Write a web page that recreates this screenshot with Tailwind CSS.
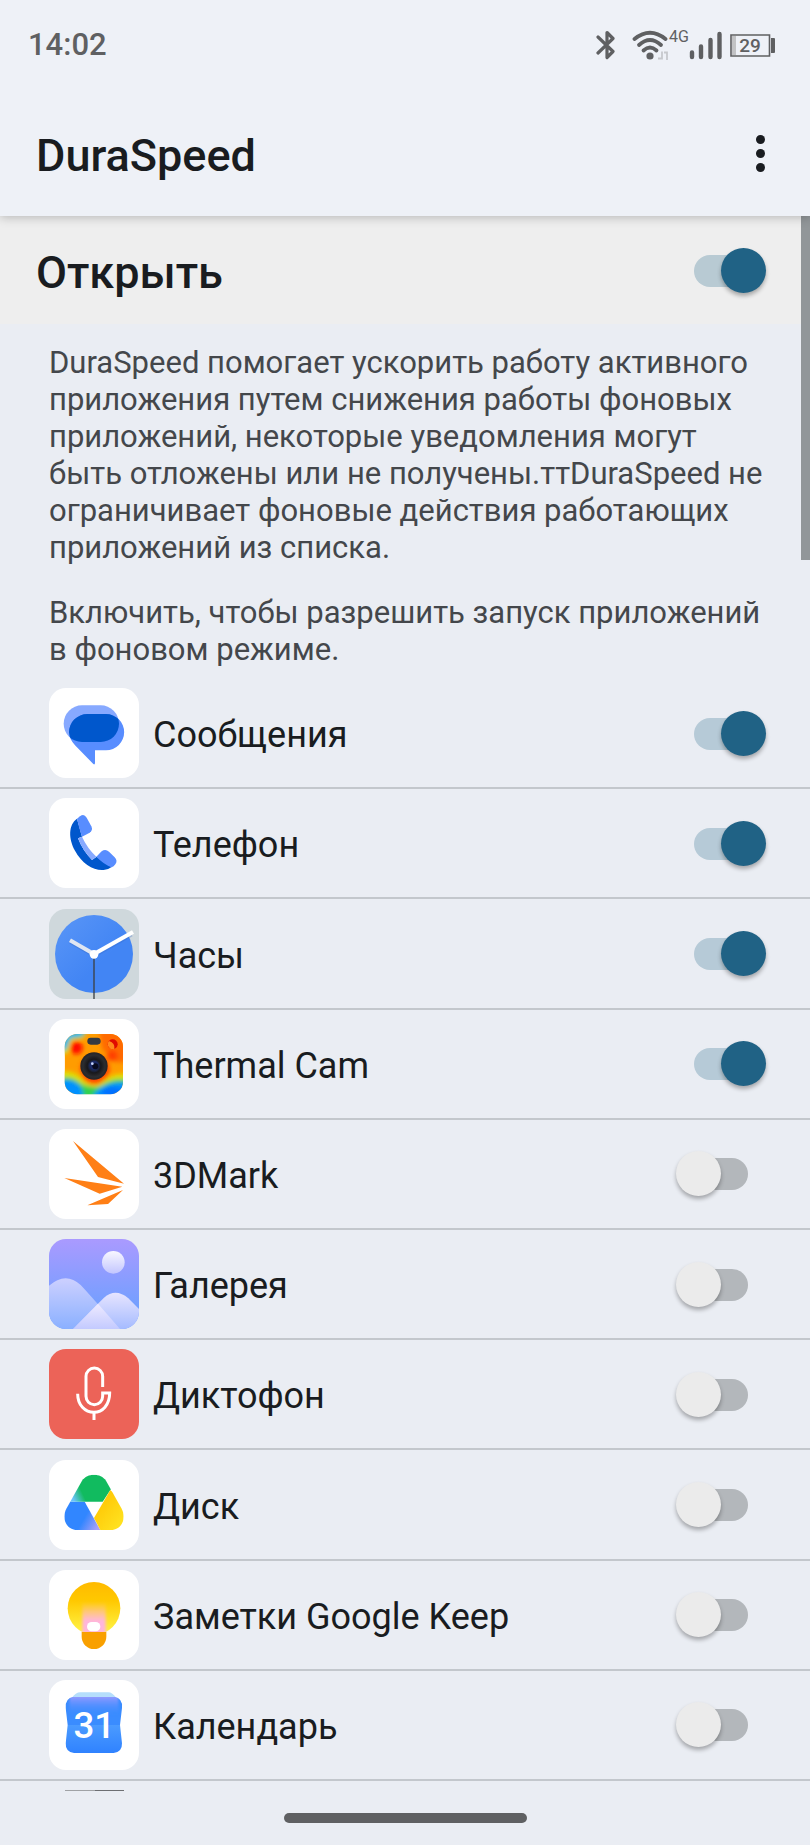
<!DOCTYPE html>
<html lang="ru">
  <head>
    <meta charset="UTF-8" />
    <meta name="viewport" content="width=device-width, initial-scale=1.0" />
    <title>DuraSpeed</title>
    <script src="https://cdn.jsdelivr.net/npm/@tailwindcss/browser@4"></script>
  </head>
  <body class="flex min-h-screen flex-col bg-[#eaedf3] font-[Roboto,sans-serif] text-[#191c20]">
    <!-- Header -->
    <header class="relative z-10 bg-[#eef1f7] shadow-[0_1px_10px_rgba(0,0,0,0.25)]">
      <!-- Status bar -->
      <div class="flex h-[90px] items-center justify-between pr-[34px] pl-7 text-[#5f6062]">
        <time class="text-[31px] font-medium">14:02</time>
        <div class="flex items-center">
          <svg class="mr-4 h-8 w-5" viewBox="0 0 20 32" fill="none" stroke="currentColor" stroke-width="3.2">
            <path d="M2 8 L17 22.500 L11 28.500 V3.500 L17 9.500 L2 24" stroke-linejoin="round" stroke-linecap="round" />
          </svg>
          <svg class="h-8 w-[37px]" viewBox="0 0 37 32" fill="none" stroke="currentColor" stroke-width="3.800" stroke-linecap="round">
            <path d="M2.500 10 Q18 -2.500 33.500 10" />
            <path d="M7 16 Q18 6 29 16" />
            <path d="M11.500 21.500 Q18 15.500 24.500 21.500" />
            <circle cx="18" cy="27" r="3.600" fill="currentColor" stroke="none" />
            <path d="M26 29.500 H30 V22.500 M35 31 V23.500 H32" stroke="#c6c8cc" stroke-width="1.800" stroke-linecap="butt" />
          </svg>
          <span class="-mt-4 text-[16px] leading-4">4G</span>
          <svg class="mr-2 h-8 w-[33px]" viewBox="0 0 33 32" stroke="currentColor" stroke-width="4.400" stroke-linecap="round">
            <path d="M3 23.500 V28 M12 17.500 V28 M21.500 11 V28 M30.500 5 V28" />
          </svg>
          <svg class="h-8 w-[46px]" viewBox="0 0 46 32" fill="none" stroke="currentColor">
            <path d="M1 6 H39.500 V27 H1 Z" stroke-width="1.600" />
            <path d="M2 7 H6 V26 H2 Z" fill="#c2c3c5" stroke="none" />
            <path d="M41 9 H44 Q45 9 45 10 V23 Q45 24 44 24 H41 Z" fill="currentColor" stroke="none" />
            <text x="20" y="23" text-anchor="middle" font-size="19" font-weight="500" fill="currentColor" stroke="none">29</text>
          </svg>
        </div>
      </div>
      <!-- Toolbar -->
      <div class="flex h-[126px] items-center justify-between pr-8 pl-9">
        <h1 class="pt-1 text-[45px] leading-none font-medium">DuraSpeed</h1>
        <button type="button" aria-label="Ещё" class="flex h-12 w-[35px] flex-col items-center justify-center gap-[5px]">
          <span class="size-[9px] rounded-full bg-[#191c20]"></span>
          <span class="size-[9px] rounded-full bg-[#191c20]"></span>
          <span class="size-[9px] rounded-full bg-[#191c20]"></span>
        </button>
      </div>
    </header>

    <main class="relative flex flex-1 flex-col">
      <!-- Scroll thumb -->
      <div class="absolute top-0 right-0 h-[344px] w-[9px] bg-[#919699]"></div>

      <!-- Main switch -->
      <div class="flex h-[108px] items-center justify-between bg-[#eeeeee] pr-11 pl-9">
        <label for="master" class="pt-1 text-[45px] leading-none font-medium">Открыть</label>
        <input
          id="master"
          type="checkbox"
          role="switch"
          checked
          class="relative h-[45px] w-[90px] appearance-none before:absolute before:top-[7px] before:left-[18px] before:h-8 before:w-[54px] before:rounded-full before:bg-[#b3b7bb] after:absolute after:top-0 after:left-0 after:size-[45px] after:rounded-full after:bg-[#ebebeb] after:shadow-[0_3px_4px_rgba(0,0,0,0.3)] checked:before:bg-[#b8cad3] checked:after:left-[45px] checked:after:bg-[#206285]"
        />
      </div>

      <!-- Description -->
      <div class="space-y-7 pt-5 pr-9 pb-[11px] pl-[49px] text-[31px] leading-[37px] text-[#44474b]">
        <p>
          DuraSpeed помогает ускорить работу активного приложения путем снижения работы фоновых приложений, некоторые
          уведомления могут быть отложены или не получены.ттDuraSpeed не ограничивает фоновые действия работающих
          приложений из списка.
        </p>
        <p>Включить, чтобы разрешить запуск приложений в фоновом режиме.</p>
      </div>

      <!-- Apps -->
      <ul id="appList" class="flex flex-1 flex-col"></ul>

      <!-- Top edge of the next icon -->
      <div class="flex h-[10px] items-end pl-[65px]">
        <span class="h-px w-[30px] bg-[#a0a2a5]"></span>
        <span class="h-px w-[29px] bg-[#6d6f72]"></span>
      </div>
    </main>

    <!-- Navigation handle -->
    <footer class="flex h-[54px] items-center justify-center">
      <div class="h-[10px] w-[30%] rounded-full bg-[#5f6062]"></div>
    </footer>

    <script>
      const apps = [
        {
          name: "Сообщения",
          on: true,
          icon: `
            <rect width="270" height="270" fill="#fff"/>
            <clipPath id="msgBack"><rect x="44" y="52" width="166" height="110" rx="55"/></clipPath>
            <rect x="44" y="52" width="166" height="110" rx="55" fill="#87a9ff"/>
            <path d="M115 78 H171 A54.500 54.500 0 0 1 171 187 H138 V226 Q137 231 133 228 L78 172 Q60 152 60 133 A55 55 0 0 1 115 78 Z" fill="#588dff"/>
            <path clip-path="url(#msgBack)" d="M115 78 H171 A54.500 54.500 0 0 1 171 187 H138 V226 L78 172 Q60 152 60 133 A55 55 0 0 1 115 78 Z" fill="#0057cc"/>`,
        },
        {
          name: "Телефон",
          on: true,
          icon: `
            <rect width="270" height="270" fill="#fff"/>
            <path d="M84 62 C58 80 58 122 78 158 C98 196 135 219 164 216 Q178 215 188 207 L143 176 L129 186 Q101 158 87 121 L99 116 Z" fill="#0057cc"/>
            <path d="M87 121 L99 116 Q115 151 142 176 L129 186 Q101 158 87 121 Z" fill="#87a9ff"/>
            <path d="M84 62 L93 55 Q105 46 113 59 L127 85 Q133 97 122 104 L99 116 Q90 90 84 62 Z" fill="#588dff"/>
            <path d="M142 176 L158 160 Q169 151 180 161 L197 178 Q207 189 199 199 Q194 206 188 208 Q163 198 142 176 Z" fill="#588dff"/>`,
        },
        {
          name: "Часы",
          on: true,
          icon: `
            <linearGradient id="clockFace" x1="0" y1="0" x2="1" y2="1"><stop offset="0" stop-color="#5a96f7"/><stop offset=".6" stop-color="#4285f4"/></linearGradient>
            <rect width="270" height="270" fill="#cfd8dc"/>
            <circle cx="135" cy="135" r="117" fill="url(#clockFace)"/>
            <path d="M135 139 L64 99" stroke="#3567c4" stroke-opacity=".35" stroke-width="11"/>
            <path d="M135 141 L248 77" stroke="#3567c4" stroke-opacity=".3" stroke-width="11"/>
            <path d="M135 135 L63 94" stroke="#dfe6f2" stroke-width="12"/>
            <path d="M135 135 L252 69" stroke="#fff" stroke-width="12"/>
            <path d="M135 135 V270" stroke="#3c4043" stroke-width="4"/>
            <circle cx="135" cy="136" r="13" fill="#fff"/>`,
        },
        {
          name: "Thermal Cam",
          on: true,
          icon: `
            <clipPath id="camClip"><rect x="47" y="45" width="175" height="181" rx="38"/></clipPath>
            <filter id="camBlur" x="-30%" y="-30%" width="160%" height="160%"><feGaussianBlur stdDeviation="7"/></filter>
            <radialGradient id="lens"><stop offset="0" stop-color="#0a0f2a"/><stop offset=".35" stop-color="#1c2748"/><stop offset=".5" stop-color="#18181b"/><stop offset=".8" stop-color="#2c2d30"/><stop offset="1" stop-color="#242426"/></radialGradient>
            <rect width="270" height="270" fill="#fff"/>
            <g clip-path="url(#camClip)">
              <rect x="47" y="45" width="175" height="181" fill="#ff9c00"/>
              <g filter="url(#camBlur)">
                <path d="M35 35 H115 L102 58 L68 64 L56 104 H35 Z" fill="#d8e000"/>
                <path d="M35 35 H114 L98 53 L64 58 L50 94 H35 Z" fill="#00b2f0"/>
                <path d="M150 35 H240 V130 H200 L160 90 Z" fill="#ff6a00"/>
                <circle cx="82" cy="86" r="19" fill="#ff0a00"/>
                <circle cx="190" cy="110" r="16" fill="#ff4000"/>
                <circle cx="138" cy="152" r="44" fill="#ff4800"/>
                <path d="M35 158 Q80 152 105 186 Q140 212 165 184 Q195 158 240 166 V240 H35 Z" fill="#e0e000"/>
                <path d="M35 176 Q70 168 100 196 Q140 213 165 194 Q195 174 240 182 V240 H35 Z" fill="#30d050"/>
                <path d="M35 186 Q70 176 96 204 L106 240 H35 Z M128 240 Q140 208 170 200 Q200 186 240 192 V240 Z" fill="#0090ff"/>
                <ellipse cx="190" cy="220" rx="32" ry="16" fill="#0070ff"/>
              </g>
            </g>
            <rect x="115" y="56" width="40" height="21" rx="10" fill="#343a42"/>
            <circle cx="191" cy="76" r="15" fill="#e00b00"/>
            <path d="M180 66 A15 15 0 0 0 196 90 Q199 72 180 66 Z" fill="#ff8a1c"/>
            <circle cx="135" cy="141" r="41" fill="url(#lens)"/>
            <circle cx="135" cy="139" r="14" fill="#1b2a66"/>
            <circle cx="139" cy="142" r="9" fill="#080b1e"/>
            <circle cx="130" cy="134" r="4" fill="#c7d6ff"/>`,
        },
        {
          name: "3DMark",
          on: false,
          icon: `
            <rect width="270" height="270" fill="#fff"/>
            <path d="M72 36 L225 164 L147 144 Z M46 147 L220 173 L152 194 Z M222 183 L177 225 L115 229 Z" fill="#ff7f16"/>`,
        },
        {
          name: "Галерея",
          on: false,
          icon: `
            <linearGradient id="sky" x1="0" y1="0" x2="0" y2="1"><stop offset="0" stop-color="#aa9aff"/><stop offset=".75" stop-color="#739fff"/></linearGradient>
            <linearGradient id="sun" x1="0" y1="0" x2="0" y2="1"><stop offset="0" stop-color="#f8f7ff"/><stop offset="1" stop-color="#c3c6ff"/></linearGradient>
            <linearGradient id="hill" x1="0" y1="0" x2="0" y2="1"><stop offset="0" stop-color="#cdd0ff"/><stop offset="1" stop-color="#8ab0ff"/></linearGradient>
            <linearGradient id="hill2" x1="0" y1="0" x2="0" y2="1"><stop offset="0" stop-color="#e6e4ff"/><stop offset="1" stop-color="#a5bbff"/></linearGradient>
            <linearGradient id="hill3" x1="0" y1="0" x2="0" y2="1"><stop offset="0" stop-color="#eeeaff"/><stop offset="1" stop-color="#c3caff"/></linearGradient>
            <rect width="270" height="270" fill="url(#sky)"/>
            <circle cx="193" cy="70" r="34" fill="url(#sun)"/>
            <path d="M0 140 Q50 96 95 138 Q112 156 147 196 L213 270 H0 Z" fill="url(#hill)"/>
            <path d="M72 270 L147 194 L165 176 Q200 146 238 178 L270 210 V270 Z" fill="url(#hill2)"/>
            <path d="M72 270 L147 194 L213 270 Z" fill="url(#hill3)"/>`,
        },
        {
          name: "Диктофон",
          on: false,
          icon: `
            <rect width="270" height="270" fill="#ec6358"/>
            <g fill="none" stroke="#fff" stroke-width="9">
              <path d="M161 114 V82 A25 25 0 0 0 111 82 V142 A25 25 0 0 0 161 142 V132 H182 C182 168 160 190 135 190 C108 190 86 168 86 134"/>
              <path d="M135 190 V213"/>
            </g>`,
        },
        {
          name: "Диск",
          on: false,
          icon: `
            <clipPath id="driveClip"><path d="M99 62 C115 38 155 38 171 62 L218 146 C234 178 216 210 186 210 H84 C54 210 36 178 52 146 Z"/></clipPath>
            <linearGradient id="driveGreen" gradientUnits="userSpaceOnUse" x1="70" y1="112" x2="100" y2="98"><stop offset="0" stop-color="#6cc3fb"/><stop offset="1" stop-color="#11bb5f"/></linearGradient>
            <linearGradient id="driveBlue" gradientUnits="userSpaceOnUse" x1="105" y1="175" x2="148" y2="200"><stop offset="0" stop-color="#3186ff"/><stop offset="1" stop-color="#a9a0f8"/></linearGradient>
            <linearGradient id="driveYellow" gradientUnits="userSpaceOnUse" x1="160" y1="140" x2="215" y2="185"><stop offset="0" stop-color="#ffcc0a"/><stop offset="1" stop-color="#ffe01e"/></linearGradient>
            <rect width="270" height="270" fill="#fff"/>
            <g clip-path="url(#driveClip)">
              <path d="M30 125 H107 L154 210 H30 Z" fill="url(#driveBlue)"/>
              <path d="M30 125 V30 H240 L184 90 L161 125 Z" fill="url(#driveGreen)"/>
              <path d="M184 90 L240 140 V210 H154 L135 174 Z" fill="url(#driveYellow)"/>
            </g>`,
        },
        {
          name: "Заметки Google Keep",
          on: false,
          icon: `
            <linearGradient id="bulb" x1="0" y1="0" x2="0" y2="1"><stop offset="0" stop-color="#ffba00"/><stop offset=".35" stop-color="#ffc800"/><stop offset=".9" stop-color="#fff040"/></linearGradient>
            <linearGradient id="glow" x1="0" y1="0" x2="0" y2="1"><stop offset="0" stop-color="#ffb5d5" stop-opacity="0"/><stop offset=".6" stop-color="#ffb5dd"/></linearGradient>
            <filter id="soft" x="-30%" y="-30%" width="160%" height="160%"><feGaussianBlur stdDeviation="4"/></filter>
            <clipPath id="bulbClip"><path d="M50 30 H220 V186 H50 Z"/></clipPath>
            <rect width="270" height="270" fill="#fff"/>
            <g clip-path="url(#bulbClip)">
              <circle cx="135" cy="115" r="79" fill="url(#bulb)"/>
              <rect x="100" y="96" width="70" height="96" fill="url(#glow)" filter="url(#soft)"/>
            </g>
            <rect x="114" y="156" width="40" height="28" rx="14" fill="#fff"/>
            <path d="M98 186 H172 V200 A37 37 0 0 1 98 200 Z" fill="#f9a000"/>`,
        },
        {
          name: "Календарь",
          on: false,
          icon: `
            <linearGradient id="calTop" x1="0" y1="0" x2="0" y2="1"><stop offset="0" stop-color="#a79dff"/><stop offset="1" stop-color="#3f8dff" stop-opacity="0"/></linearGradient>
            <linearGradient id="calLow" x1="0" y1="0" x2="0" y2="1"><stop offset="0" stop-color="#4b9bff"/><stop offset="1" stop-color="#2f82ff"/></linearGradient>
            <filter id="calSoft" x="-10%" y="-10%" width="120%" height="120%"><feGaussianBlur stdDeviation="3"/></filter>
            <clipPath id="calClip"><path d="M74 51 H195 Q222 54 219 84 L213 135 L219 190 Q220 216 194 219 H75 Q49 216 50 190 L56 135 L50 84 Q48 54 74 51 Z"/></clipPath>
            <rect width="270" height="270" fill="#fff"/>
            <path d="M68 54 Q80 37 94 37 H178 Q190 37 202 54 Z" fill="#b5defc"/>
            <g clip-path="url(#calClip)">
              <rect x="47" y="51" width="175" height="84" fill="#3a8cff"/>
              <rect x="62" y="44" width="146" height="62" fill="url(#calTop)" filter="url(#calSoft)"/>
              <rect x="47" y="135" width="175" height="85" fill="url(#calLow)"/>
            </g>
            <text x="136" y="175" text-anchor="middle" font-size="110" font-weight="500" fill="#fff">31</text>`,
        },
      ];

      const appList = document.getElementById("appList");

      apps.forEach((app, i) => {
        appList.innerHTML += `
          <li class="flex flex-1 items-center border-b-2 border-[#c3c7cc] pr-11 pl-[49px]">
            <svg viewBox="0 0 270 270" class="my-2 size-[90px] shrink-0 rounded-[17px]" aria-hidden="true">${app.icon}</svg>
            <label for="app${i}" class="flex-1 pt-1 pl-[14px] text-[36px] leading-none">${app.name}</label>
            <input
              id="app${i}"
              type="checkbox"
              role="switch"
              ${app.on ? "checked" : ""}
              class="relative h-[45px] w-[90px] appearance-none before:absolute before:top-[7px] before:left-[18px] before:h-8 before:w-[54px] before:rounded-full before:bg-[#b3b7bb] after:absolute after:top-0 after:left-0 after:size-[45px] after:rounded-full after:bg-[#ebebeb] after:shadow-[0_3px_4px_rgba(0,0,0,0.3)] checked:before:bg-[#b6cad7] checked:after:left-[45px] checked:after:bg-[#206285]"
            />
          </li>
        `;
      });
    </script>
  </body>
</html>
